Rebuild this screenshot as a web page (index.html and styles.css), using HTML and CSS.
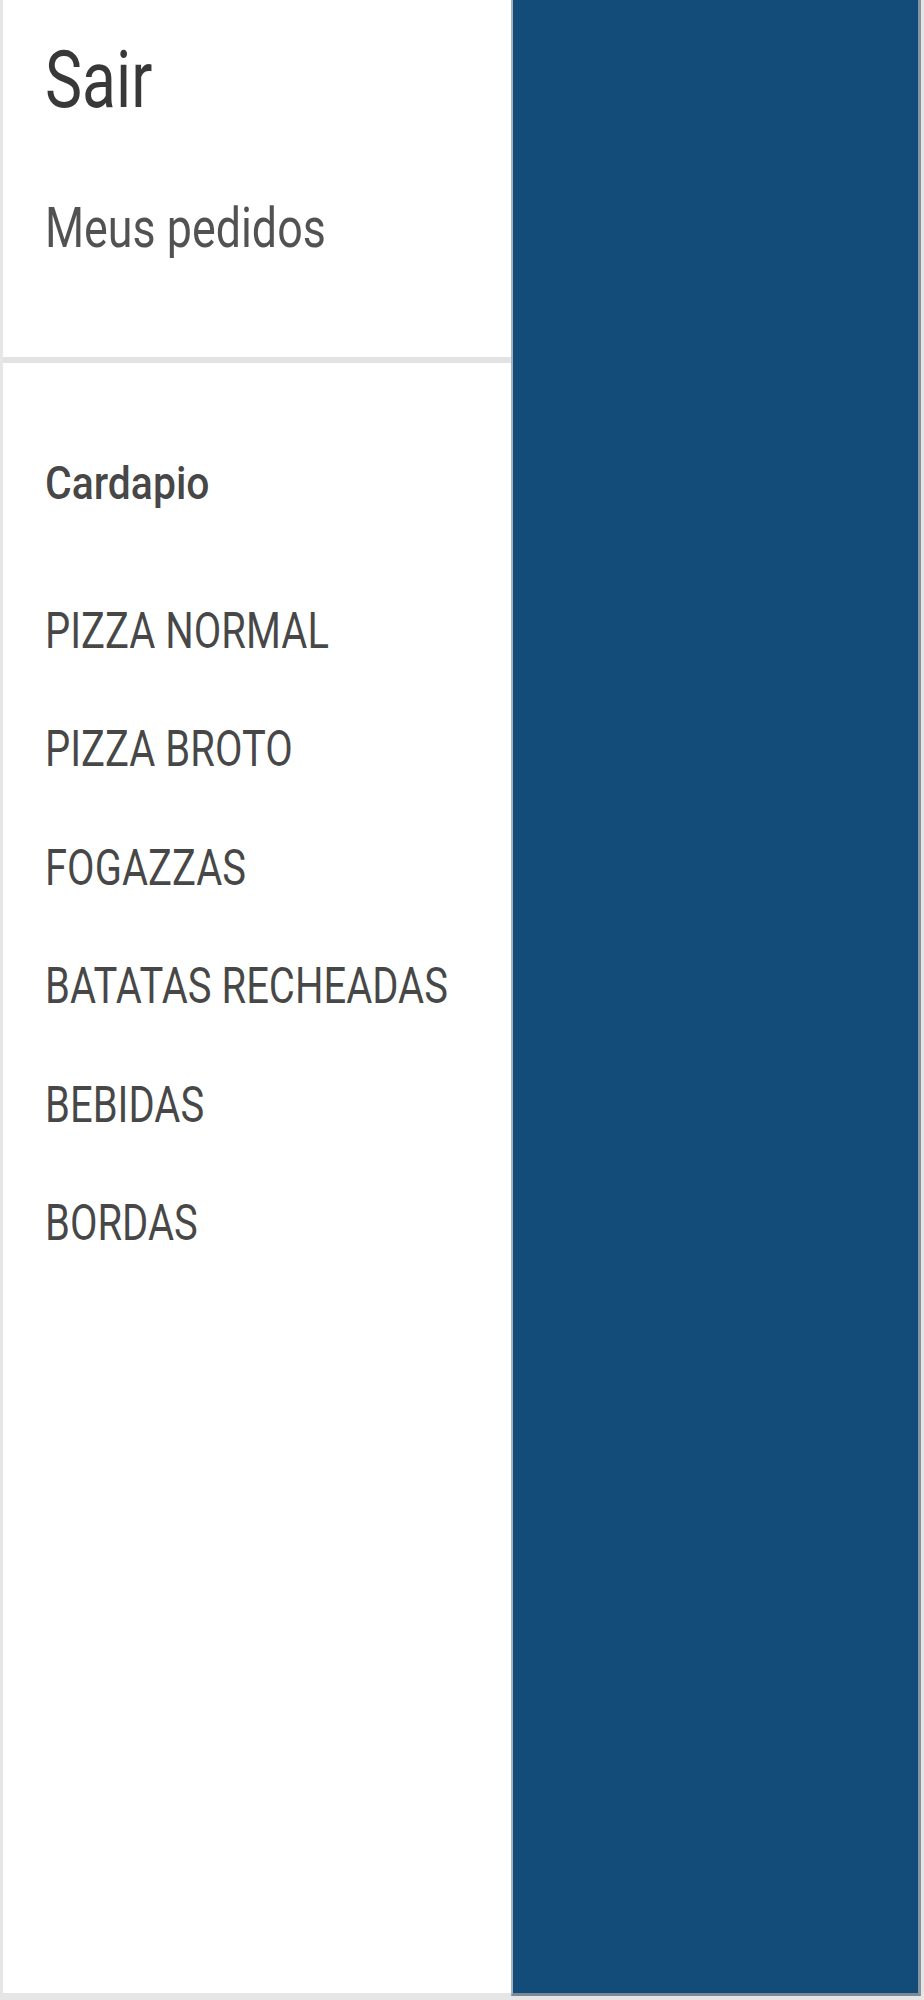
FILE: index.html
```html
<!DOCTYPE html>
<html lang="pt-BR">
<head>
    <meta charset="UTF-8">
    <meta name="viewport" content="width=device-width, initial-scale=1.0">
    <title>Cardapio</title>
    <link rel="stylesheet" href="styles.css">
</head>
<body>

<div class="app">
    <nav class="drawer">
        <div class="drawer-header">
            <a class="sair"><span>Sair</span></a>
            <a class="pedidos"><span>Meus pedidos</span></a>
        </div>
        <div class="drawer-list">
            <div class="subheader"><span>Cardapio</span></div>
            <a class="item"><span>PIZZA NORMAL</span></a>
            <a class="item"><span>PIZZA BROTO</span></a>
            <a class="item"><span>FOGAZZAS</span></a>
            <a class="item"><span>BATATAS RECHEADAS</span></a>
            <a class="item"><span>BEBIDAS</span></a>
            <a class="item"><span>BORDAS</span></a>
        </div>
    </nav>
    <div class="scrim"></div>
</div>

</body>
</html>
```
FILE: styles.css
```css
body {
    margin: 0;
    background-color: #e6e6e6;
    font-family: Roboto, "Liberation Sans", Arial, sans-serif;
    color: rgba(0, 0, 0, 0.76);
}
.app {
    display: flex;
    align-items: flex-start;
    margin: 0 3px;
    height: 1996px;
}
.drawer {
    width: 508px;
    height: 1993px;
    background-color: #fff;
}
.scrim {
    flex: 1;
    height: 1993px;
    background-color: #134b79;
    border-left: 2px solid #9fb1c3;
    border-right: 3px solid #8693a0;
    border-bottom: 3px solid #7d8995;
}
.drawer a,
.subheader {
    display: block;
    line-height: 1;
    padding-left: 42px;
    white-space: nowrap;
}
.drawer span {
    display: inline-block;
    transform: scaleX(0.8);
    transform-origin: left center;
}
.drawer-header {
    padding-top: 40px;
    padding-bottom: 101px;
    border-bottom: 6px solid #e3e3e3;
}
.sair {
    font-size: 80px;
    color: rgba(0, 0, 0, 0.78);
}
.sair span {
    transform: scaleX(0.78);
}
.pedidos {
    margin-top: 80px;
    font-size: 56px;
    color: rgba(0, 0, 0, 0.68);
}
.drawer-list {
    padding-top: 96px;
}
.subheader {
    font-size: 47px;
    font-weight: 500;
    height: 47px;
    margin-bottom: 66px;
    color: rgba(0, 0, 0, 0.74);
}
.subheader span {
    transform: scaleX(0.87);
}
.item {
    font-size: 50px;
    height: 118.4px;
    line-height: 118.4px !important;
    color: rgba(0, 0, 0, 0.72);
}
```
